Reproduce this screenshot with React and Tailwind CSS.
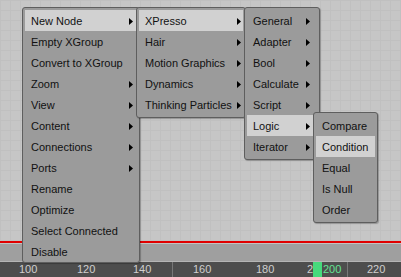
const mainItems = [
  { label: "New Node", sub: true, active: true },
  { label: "Empty XGroup" },
  { label: "Convert to XGroup" },
  { label: "Zoom", sub: true },
  { label: "View", sub: true },
  { label: "Content", sub: true },
  { label: "Connections", sub: true },
  { label: "Ports", sub: true },
  { label: "Rename" },
  { label: "Optimize" },
  { label: "Select Connected" },
  { label: "Disable" },
];

const nodeItems = [
  { label: "XPresso", sub: true, active: true },
  { label: "Hair", sub: true },
  { label: "Motion Graphics", sub: true },
  { label: "Dynamics", sub: true },
  { label: "Thinking Particles", sub: true },
];

const xpressoItems = [
  { label: "General", sub: true },
  { label: "Adapter", sub: true },
  { label: "Bool", sub: true },
  { label: "Calculate", sub: true },
  { label: "Script", sub: true },
  { label: "Logic", sub: true, active: true },
  { label: "Iterator", sub: true },
];

const logicItems = [
  { label: "Compare" },
  { label: "Condition", active: true },
  { label: "Equal" },
  { label: "Is Null" },
  { label: "Order" },
];

function Arrow() {
  return (
    <svg width="4" height="7" viewBox="0 0 4 7" className="shrink-0">
      <polygon points="0,0 4,3.5 0,7" fill="#000" />
    </svg>
  );
}

function Menu({ items, className, arrowPad }) {
  return (
    <div
      className={`absolute z-10 rounded-[3px] border border-[#5e5e5e] bg-[#9b9b9b] p-[2px] shadow-[1px_1px_1px_rgba(0,0,0,0.25)] ${className}`}
    >
      {items.map((item) => (
        <div
          key={item.label}
          className={`flex h-[21px] items-center pl-[6px] pt-px whitespace-nowrap ${
            item.active ? "bg-[#d1d1d1]" : ""
          }`}
          style={{ paddingRight: arrowPad }}
        >
          <span className="flex-1">{item.label}</span>
          {item.sub && <Arrow />}
        </div>
      ))}
    </div>
  );
}

export default function App() {
  return (
    <div className="relative flex h-[277px] w-[401px] flex-col overflow-hidden font-['Liberation_Sans',Arial,sans-serif] text-[11px] text-[#111]">
      <div className="flex-1 bg-[#c6c6c6] bg-[linear-gradient(to_right,#c0c0c0_1px,transparent_1px),linear-gradient(to_bottom,#c0c0c0_1px,transparent_1px)] bg-[size:10px_10px]" />
      <div className="h-[2px] bg-[#e00000]" />
      <div className="h-[1px] bg-[#c2c2c2]" />
      <div className="h-[17px] bg-[#9f9f9f]" />
      <div className="h-[1px] bg-[#b5b5b5]" />
      <div className="flex h-[15px] items-center bg-[#4d4d4d] pl-[19px] leading-none text-[#cfcfcf]">
        <span className="w-[58px]">100</span>
        <span className="w-[56px]">120</span>
        <span className="w-[39px]">140</span>
        <div className="h-full w-px bg-[#777]" />
        <span className="ml-[20px] w-[63px]">160</span>
        <span className="w-[51px]">180</span>
        <span className="w-[6px]">2</span>
        <div className="h-full w-[9px] bg-[#46d97c]" />
        <span className="ml-px w-[24px] text-[#63e394]">200</span>
        <div className="h-full w-px bg-[#777]" />
        <span className="ml-[19px]">220</span>
      </div>

      <Menu items={mainItems} arrowPad={4} className="left-[22px] top-[7px] h-[256px] w-[118px]" />
      <Menu items={nodeItems} arrowPad={2} className="left-[136px] top-[7px] h-[111px] w-[110px]" />
      <Menu items={xpressoItems} arrowPad={7} className="left-[244px] top-[7px] h-[153px] w-[76px]" />
      <Menu items={logicItems} arrowPad={4} className="left-[313px] top-[112px] h-[111px] w-[65px]" />
    </div>
  );
}
